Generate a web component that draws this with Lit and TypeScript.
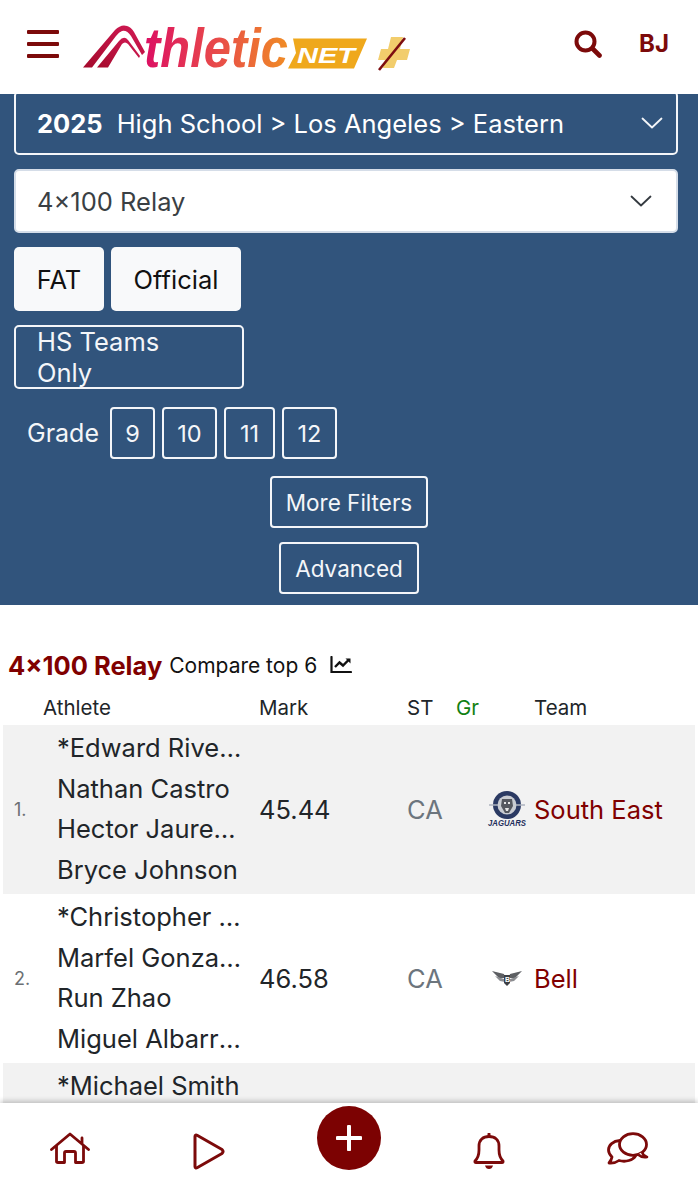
import { LitElement, css, html, svg } from 'lit';
import { customElement } from 'lit/decorators.js';

const rows = [
  {
    rank: '1.',
    names: ['*Edward Rivera', 'Nathan Castro', 'Hector Jaureguis', 'Bryce Johnson'],
    mark: '45.44',
    state: 'CA',
    team: 'South East',
    logo: 'jaguars',
  },
  {
    rank: '2.',
    names: ['*Christopher Mendoza', 'Marfel Gonzalez', 'Run Zhao', 'Miguel Albarran'],
    mark: '46.58',
    state: 'CA',
    team: 'Bell',
    logo: 'bell',
  },
  {
    rank: '3.',
    names: ['*Michael Smith', 'Jordan Lee', 'Chris Wells', 'David Ortiz'],
    mark: '46.90',
    state: 'CA',
    team: 'Garfield',
    logo: '',
  },
];

const logo = html`<svg class="logo" width="328" height="52" viewBox="83 20 328 52">
  <defs>
    <linearGradient id="word" x1="0" x2="1" y1="0" y2="0">
      <stop offset="0" stop-color="#dc0f63"></stop>
      <stop offset="0.5" stop-color="#e84a4a"></stop>
      <stop offset="1" stop-color="#f08c25"></stop>
    </linearGradient>
    <linearGradient id="peak" x1="0" x2="1" y1="1" y2="0">
      <stop offset="0" stop-color="#a50a2c"></stop>
      <stop offset="1" stop-color="#d21a55"></stop>
    </linearGradient>
  </defs>
  <path fill="url(#peak)" d="M83 67.5 L115 30 Q121 24 127 26 Q131 27 134 32 L145 52 L142 55 L131 36 Q127 30 122 31 Q119 32 116 36 L92 67.5 Z"></path>
  <path fill="url(#peak)" d="M97 67.5 L119 41 Q124 35 128 40 L140 56 L139 58 L128 44 Q125 41 122 44 L108 67.5 Z"></path>
  <text class="word" x="144" y="67" fill="url(#word)" textLength="144" lengthAdjust="spacingAndGlyphs">thletic</text>
  <path fill="#efa81c" d="M293 38.5 L367 38.5 L354 68.5 L288 68.5 L296 53 Z"></path>
  <text class="net" x="297" y="63" fill="#fff" textLength="58" lengthAdjust="spacingAndGlyphs">NET</text>
  <path fill="#f2cd6c" d="M391 37 L403 37 L400 49 L410 49 L407 60 L397 60 L394 68 L383 68 L385 60 L378 60 L381 49 L388 49 Z"></path>
  <path stroke="#7d0d10" stroke-width="2.6" fill="none" d="M379 70 L405 38"></path>
</svg>`;

const jaguars = html`<svg class="team-logo" width="40" height="38" viewBox="0 0 40 38">
  <circle cx="20" cy="15" r="14" fill="#2b3a63"></circle>
  <circle cx="20" cy="15" r="9.5" fill="#c9ccd2"></circle>
  <path fill="#55585f" d="M15 9 L25 9 L26 16 L22 23 L18 23 L14 16 Z"></path>
  <path fill="#e6e6e6" d="M17 12 L19 12 L19 14 L17 14 Z M21 12 L23 12 L23 14 L21 14 Z M18 18 L22 18 L21 21 L19 21 Z"></path>
  <path stroke="#aeb4c0" stroke-width="1.4" d="M2 15 L11 15 M29 15 L38 15"></path>
  <text class="jag" x="1" y="36" fill="#1f2f5c" textLength="38" lengthAdjust="spacingAndGlyphs">JAGUARS</text>
</svg>`;

const bell = html`<svg class="team-logo" width="32" height="20" viewBox="0 0 32 20">
  <path fill="#5d5f63" d="M1 3 L13 6 L14 10 L8 10 Z M31 3 L19 6 L18 10 L24 10 Z"></path>
  <path fill="#8b8d91" d="M4 8 L13 11 L14 14 L9 13 Z M28 8 L19 11 L18 14 L23 13 Z"></path>
  <path fill="#3d3f44" d="M13 7 L19 7 L19 15 L16 18 L13 15 Z"></path>
  <text class="bell-b" x="14" y="14" fill="#fff">B</text>
</svg>`;

const chevron = (color: string) => svg`<svg width="22" height="12" viewBox="0 0 22 12">
  <path d="M1.5 1.5 L11 10.5 L20.5 1.5" fill="none" stroke=${color} stroke-width="1.8" stroke-linecap="round" stroke-linejoin="round"></path>
</svg>`;

@customElement('app-root')
export class AppRoot extends LitElement {
  static styles = css`
    :host {
      display: flex;
      flex-direction: column;
      height: 1200px;
      overflow: hidden;
      background: #fff;
      font-family: Inter, "Liberation Sans", sans-serif;
      color: #212529;
    }
    .top {
      flex: none;
      height: 94px;
      display: flex;
      align-items: center;
      background: #fff;
      position: relative;
      z-index: 2;
    }
    .burger {
      margin: 0 0 6px 27px;
      width: 32px;
      display: flex;
      flex-direction: column;
      gap: 8.5px;
    }
    .burger span {
      height: 3.5px;
      background: #7c0a0a;
      border-radius: 1px;
    }
    .logo {
      margin: -2px 0 0 23.5px;
      flex: none;
    }
    .word {
      font: italic 700 56px "Liberation Sans", sans-serif;
    }
    .net {
      font: italic 700 22px "Liberation Sans", sans-serif;
    }
    .jag {
      font: italic 700 9px "Liberation Sans", sans-serif;
    }
    .bell-b {
      font: 700 7px "Liberation Sans", sans-serif;
    }
    .search {
      margin: -7px 0 0 auto;
    }
    .initials {
      margin: -7px 29px 0 37px;
      font-size: 24px;
      font-weight: 700;
      color: #7c0a0a;
    }
    main {
      flex: 1;
      min-height: 0;
      overflow: hidden;
    }
    .filters {
      background: #31547c;
      height: 511px;
      box-sizing: border-box;
      padding: 0 20px 0 14px;
      overflow: hidden;
      display: flex;
      flex-direction: column;
      color: #fff;
    }
    .select {
      flex: none;
      box-sizing: border-box;
      height: 64px;
      border: 2px solid #f4f6f9;
      border-radius: 5px;
      display: flex;
      align-items: center;
      justify-content: space-between;
      padding: 0 13px 0 21px;
      font-size: 25.5px;
    }
    .select.season {
      margin-top: -3px;
      color: #fff;
    }
    .select.season b {
      margin-right: 14px;
      font-weight: 700;
    }
    .select.event {
      margin-top: 14px;
      background: #fff;
      color: #3a3f44;
      border-color: #d5dde8;
      padding-right: 24px;
    }
    .btn-row {
      display: flex;
      gap: 7px;
      margin-top: 14px;
    }
    .btn {
      box-sizing: border-box;
      height: 64px;
      display: flex;
      align-items: center;
      justify-content: center;
      border-radius: 5px;
      font-size: 25.5px;
      padding: 0 21px;
    }
    .btn.solid {
      background: #f8f9fa;
      color: #111;
    }
    .btn.line {
      border: 2px solid #f4f6f9;
      color: #f4f6f9;
    }
    .grade {
      display: flex;
      align-items: center;
      margin-top: 18px;
      padding-left: 13px;
      font-size: 25px;
      color: #f4f6f9;
    }
    .grade .label {
      margin-right: 11px;
    }
    .grade .chip {
      box-sizing: border-box;
      height: 52px;
      display: flex;
      align-items: center;
      justify-content: center;
      border: 2px solid #f4f6f9;
      border-radius: 4px;
      font-size: 23.5px;
      margin-right: 7px;
    }
    .small {
      align-self: center;
      box-sizing: border-box;
      height: 52px;
      display: flex;
      align-items: center;
      border: 2px solid #f4f6f9;
      border-radius: 4px;
      font-size: 22.5px;
      padding: 0 14px;
      margin: 17px 0 0 6px;
      color: #f4f6f9;
    }
    .small + .small {
      margin-top: 14px;
    }
    .heading {
      display: flex;
      align-items: center;
      margin: 43px 0 0 8px;
      height: 34px;
    }
    .heading h2 {
      margin: 0 7px 0 0;
      font-size: 25.5px;
      font-weight: 700;
      color: #800000;
    }
    .heading .compare {
      font-size: 21px;
      color: #111;
      margin-right: 13px;
    }
    .head {
      display: grid;
      grid-template-columns: 216px 148px 49px 78px 1fr;
      padding-left: 43px;
      margin-top: 7px;
      height: 36px;
      align-items: center;
      font-size: 20.5px;
      color: #212529;
    }
    .head .gr {
      color: #118011;
    }
    .row {
      margin: 0 3px;
      display: grid;
      grid-template-columns: 54px 202px 148px 80px 47px 1fr;
      align-items: center;
      height: 168.75px;
      font-size: 25.5px;
      color: #212529;
    }
    .row.odd {
      background: #f2f2f2;
    }
    .rank {
      font-size: 18px;
      color: #6b6f73;
      padding-left: 11px;
    }
    .names div {
      height: 40.5px;
      line-height: 40.5px;
      width: 186px;
      white-space: nowrap;
      overflow: hidden;
      text-overflow: ellipsis;
    }
    .state {
      color: #6c757d;
    }
    .team-cell {
      display: flex;
      justify-content: center;
      padding-right: 7px;
    }
    .team {
      color: #800000;
      white-space: nowrap;
    }
    nav {
      flex: none;
      height: 97px;
      position: relative;
      z-index: 2;
      background: #fff;
      box-shadow: 0 -2px 5px rgba(0, 0, 0, 0.22);
      display: grid;
      grid-template-columns: repeat(5, 1fr);
      align-items: start;
      justify-items: center;
    }
    nav svg {
      margin-top: 29px;
    }
    .plus {
      margin-top: 3px;
      width: 64px;
      height: 64px;
      border-radius: 50%;
      background: #7c0202;
      display: flex;
      align-items: center;
      justify-content: center;
    }
    .plus svg {
      margin: 0;
    }
  `;

  render() {
    return html`
      <header class="top">
        <div class="burger"><span></span><span></span><span></span></div>
        ${logo}
        <svg class="search" width="28" height="28" viewBox="0 0 28 28">
          <circle cx="11.5" cy="11.5" r="9" fill="none" stroke="#7c0a0a" stroke-width="4"></circle>
          <path d="M18.5 18.5 L25.5 25.5" stroke="#7c0a0a" stroke-width="4.6" stroke-linecap="round"></path>
        </svg>
        <div class="initials">BJ</div>
      </header>
      <main>
        <section class="filters">
          <div class="select season">
            <span><b>2025</b>High School &gt; Los Angeles &gt; Eastern</span>
            ${chevron('#f4f6f9')}
          </div>
          <div class="select event">
            <span>4x100 Relay</span>
            ${chevron('#343a40')}
          </div>
          <div class="btn-row">
            <div class="btn solid" style="width:90px">FAT</div>
            <div class="btn solid" style="width:130px">Official</div>
          </div>
          <div class="btn-row">
            <div class="btn line" style="width:230px">HS Teams Only</div>
          </div>
          <div class="grade">
            <span class="label">Grade</span>
            <div class="chip" style="width:45px">9</div>
            <div class="chip" style="width:55px">10</div>
            <div class="chip" style="width:51px">11</div>
            <div class="chip" style="width:55px">12</div>
          </div>
          <div class="small">More Filters</div>
          <div class="small">Advanced</div>
        </section>
        <div class="heading">
          <h2>4x100 Relay</h2>
          <span class="compare">Compare top 6</span>
          <svg width="22" height="18" viewBox="0 0 22 18">
            <path d="M1.5 1 V16 H21" fill="none" stroke="#111" stroke-width="2.2" stroke-linecap="round"></path>
            <path d="M5 11 L9.5 6.5 L13 9.5 L19 3.5" fill="none" stroke="#111" stroke-width="2.4"></path>
            <path d="M15.5 2.5 H20.5 V7.5 Z" fill="#111"></path>
          </svg>
        </div>
        <div class="head">
          <span>Athlete</span><span>Mark</span><span>ST</span><span class="gr">Gr</span><span>Team</span>
        </div>
        ${rows.map(
          (r, i) => html`
            <div class="row ${i % 2 === 0 ? 'odd' : ''}">
              <span class="rank">${r.rank}</span>
              <div class="names">${r.names.map((n) => html`<div>${n}</div>`)}</div>
              <span>${r.mark}</span>
              <span class="state">${r.state}</span>
              <div class="team-cell">${r.logo === 'jaguars' ? jaguars : r.logo === 'bell' ? bell : ''}</div>
              <span class="team">${r.team}</span>
            </div>
          `
        )}
      </main>
      <nav>
        <svg width="40" height="32" viewBox="0 0 40 32">
          <path d="M1.5 17.5 L20 2 L38.5 17.5 M32 6 V12" fill="none" stroke="#7c0a0a" stroke-width="2.8" stroke-linecap="round" stroke-linejoin="round"></path>
          <path d="M6.5 14 V29.5 Q6.5 30.5 8 30.5 H14.5 V21 Q14.5 19.5 16 19.5 H24 Q25.5 19.5 25.5 21 V30.5 H32 Q33.5 30.5 33.5 29.5 V14" fill="none" stroke="#7c0a0a" stroke-width="2.8" stroke-linejoin="round"></path>
        </svg>
        <svg width="32" height="37" viewBox="0 0 32 37" style="margin-top:30px">
          <path d="M2 3.5 Q2 1.2 4.5 2.5 L29 16.5 Q31 18.5 29 20.5 L4.5 34.5 Q2 35.8 2 33.5 Z" fill="none" stroke="#7c0a0a" stroke-width="3" stroke-linejoin="round"></path>
        </svg>
        <div class="plus">
          <svg width="26" height="26" viewBox="0 0 26 26">
            <path d="M13 1.5 V24.5 M1.5 13 H24.5" stroke="#fff" stroke-width="4" stroke-linecap="round"></path>
          </svg>
        </div>
        <svg width="32" height="37" viewBox="0 0 32 37" style="margin-top:30px">
          <path d="M16 1 V3.5" stroke="#7c0a0a" stroke-width="3" stroke-linecap="round"></path>
          <path d="M2 28 Q6 24 6 17 V13 C6 7 10 3.5 16 3.5 C22 3.5 26 7 26 13 V17 Q26 24 30 28 Q30.5 29.5 29 29.5 H3 Q1.5 29.5 2 28 Z" fill="none" stroke="#7c0a0a" stroke-width="2.8" stroke-linejoin="round"></path>
          <path d="M12 32.5 H20 Q19 36 16 36 Q13 36 12 32.5 Z" fill="#7c0a0a"></path>
        </svg>
        <svg width="42" height="33" viewBox="0 0 42 33">
          <path d="M13 8.5 C6 9 1.5 13 1.5 18 C1.5 21 3 23 5 25 Q4.5 28 2 31 Q8 31.5 12 28.5 C19 30.5 26 28 28.5 24" fill="none" stroke="#7c0a0a" stroke-width="2.8" stroke-linecap="round" stroke-linejoin="round"></path>
          <ellipse cx="26" cy="12.5" rx="13.5" ry="10.8" fill="#fff" stroke="#7c0a0a" stroke-width="2.8"></ellipse>
          <path d="M35 20 Q36 24 40 25 Q35 26 31 22.5" fill="#fff" stroke="#7c0a0a" stroke-width="2.6" stroke-linejoin="round"></path>
        </svg>
      </nav>
    `;
  }
}
